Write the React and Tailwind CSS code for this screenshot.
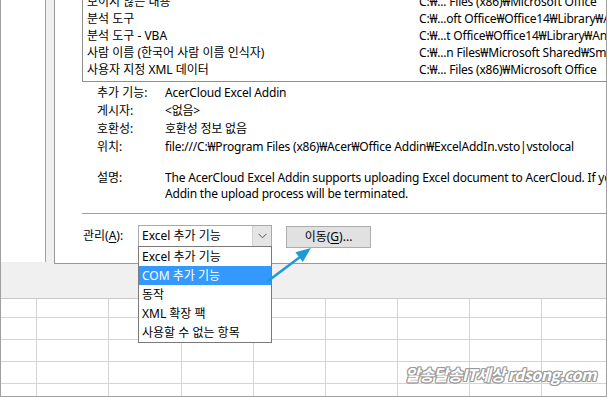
import React from "react";

const FONT = { fontFamily: '"Noto Sans", "Noto Sans CJK KR", sans-serif' };

const listRows = [
  ["보이지 않는 내용", "C:₩... Files (x86)₩Microsoft Office"],
  ["분석 도구", "C:₩...oft Office₩Office14₩Library₩Analysis"],
  ["분석 도구 - VBA", "C:₩...t Office₩Office14₩Library₩Analysis"],
  ["사람 이름 (한국어 사람 이름 인식자)", "C:₩...n Files₩Microsoft Shared₩Smart Tag"],
  ["사용자 지정 XML 데이터", "C:₩... Files (x86)₩Microsoft Office"],
];

const details = [
  ["추가 기능:", "AcerCloud Excel Addin"],
  ["게시자:", "<없음>"],
  ["호환성:", "호환성 정보 없음"],
  ["위치:", "file:///C:₩Program Files (x86)₩Acer₩Office Addin₩ExcelAddIn.vsto|vstolocal"],
];

const dropItems = ["Excel 추가 기능", "COM 추가 기능", "동작", "XML 확장 팩", "사용할 수 없는 항목"];

const colWidths = [36, 72, 73, 72, 72, 72, 72, 72, 72];
const rowHeights = ["h-[19px]", "h-[22px]", "h-[22px]", "h-[22px]"];

function GridRow({ h, last }) {
  return (
    <div className={`flex shrink-0 ${last ? "flex-1" : h + " border-b border-[#d4d4d4]"}`}>
      {colWidths.map((w, i) => (
        <div
          key={i}
          className={`shrink-0 h-full ${i < colWidths.length - 1 ? "border-r border-[#d4d4d4]" : ""}`}
          style={{ width: w }}
        />
      ))}
    </div>
  );
}

export default function App() {
  return (
    <div
      className="w-[607px] h-[397px] relative overflow-hidden bg-[#f0f0f0] border-l border-r border-b border-[#a0a0a0] flex flex-col text-[12px] text-black"
      style={FONT}
    >
      {/* top part: left column, strip, dialog */}
      <div className="flex h-[264px] shrink-0 items-start">
        <div className="w-[45px] h-[262px] shrink-0 bg-white border-r border-[#a0a0a0]" />
        <div className="w-[8px] shrink-0" />
        <div className="flex-1 min-w-0 h-[264px] bg-white border-l border-b border-[#999999] overflow-hidden flex flex-col">
          {/* list box */}
          <div className="ml-[27px] -mt-[8px] border border-r-0 border-[#8f8f8f] pb-[3px] whitespace-nowrap">
            {listRows.map(([a, b], i) => (
              <div key={i} className="flex h-[17px] leading-[17px] pl-[4px]">
                <div className="w-[332px] shrink-0">{a}</div>
                <div className="tracking-[-0.2px]">{b}</div>
              </div>
            ))}
          </div>
          {/* details */}
          <div className="ml-[42px] mt-[2px] whitespace-nowrap">
            {details.map(([a, b], i) => (
              <div key={i} className="flex h-[18px] leading-[18px]">
                <div className="w-[68px] shrink-0">{a}</div>
                <div className="tracking-[-0.2px]">{b}</div>
              </div>
            ))}
            <div className="flex mt-[14px] leading-[16px]">
              <div className="w-[68px] shrink-0">설명:</div>
              <div className="tracking-[-0.2px]">
                <div>The AcerCloud Excel Addin supports uploading Excel document to AcerCloud. If you close the</div>
                <div>Addin the upload process will be terminated.</div>
              </div>
            </div>
          </div>
          {/* separator */}
          <div className="ml-[27px] mt-[11px] border-t border-[#a0a0a0]" />
          {/* manage row */}
          <div className="flex items-start mt-[11px] ml-[28px] whitespace-nowrap">
            <div className="w-[55px] shrink-0 h-[22px] leading-[22px]">
              관리(<span className="underline underline-offset-2">A</span>):
            </div>
            <div className="w-[134px] h-[22px] shrink-0 border border-[#a9a9a9] bg-white flex">
              <div className="flex-1 pl-[3px] leading-[20px]">Excel 추가 기능</div>
              <div className="w-[19px] h-full bg-[#e5e5e5] border-l border-[#d0d0d0] flex items-center justify-center">
                <svg width="9" height="6" viewBox="0 0 9 6">
                  <path d="M0.5 0.8 L4.5 4.8 L8.5 0.8" fill="none" stroke="#555" strokeWidth="1" />
                </svg>
              </div>
            </div>
            <div className="ml-[14px] mt-[1px] w-[85px] h-[22px] shrink-0 bg-[#e1e1e1] border border-[#adadad] flex items-center justify-center leading-[20px]">
              이동(<span className="underline underline-offset-2">G</span>)...
            </div>
          </div>
        </div>
      </div>

      {/* gray band */}
      <div className="h-[34px] shrink-0" />

      {/* spreadsheet grid */}
      <div className="flex-1 flex flex-col bg-white border-t border-[#c8c8c8]">
        {rowHeights.map((h, i) => (
          <GridRow key={i} h={h} />
        ))}
        <GridRow last />
      </div>

      {/* dropdown list overlay */}
      <div className="absolute left-[137px] top-[246px] w-[134px] bg-white border border-[#7a7a7a] whitespace-nowrap">
        {dropItems.map((t, i) => (
          <div
            key={i}
            className={`h-[19px] leading-[19px] pl-[3px] ${i === 1 ? "bg-[#3399ff] text-white" : ""}`}
          >
            {t}
          </div>
        ))}
      </div>

      {/* blue arrow */}
      <svg className="absolute left-[-1px] top-0" width="607" height="397" viewBox="0 0 607 397">
        <line x1="268" y1="281" x2="300" y2="257" stroke="#1e9ad6" strokeWidth="2.5" strokeLinecap="round" />
        <polygon points="311,248 295.4,252.3 302.8,261.9" fill="#1e9ad6" />
      </svg>

      {/* watermark */}
      <div
        className="absolute right-[10px] bottom-[10px] text-[16px] font-bold italic text-white tracking-[-0.5px] whitespace-nowrap [text-shadow:1px_1px_0_#9a9a9a,-1px_-1px_0_#9a9a9a,1px_-1px_0_#9a9a9a,-1px_1px_0_#9a9a9a,1px_0_0_#9a9a9a,-1px_0_0_#9a9a9a,0_1px_0_#9a9a9a,0_-1px_0_#9a9a9a]"
        style={{ fontFamily: '"Noto Sans CJK KR", sans-serif' }}
      >
        알송달송IT세상 rdsong.com
      </div>
    </div>
  );
}
